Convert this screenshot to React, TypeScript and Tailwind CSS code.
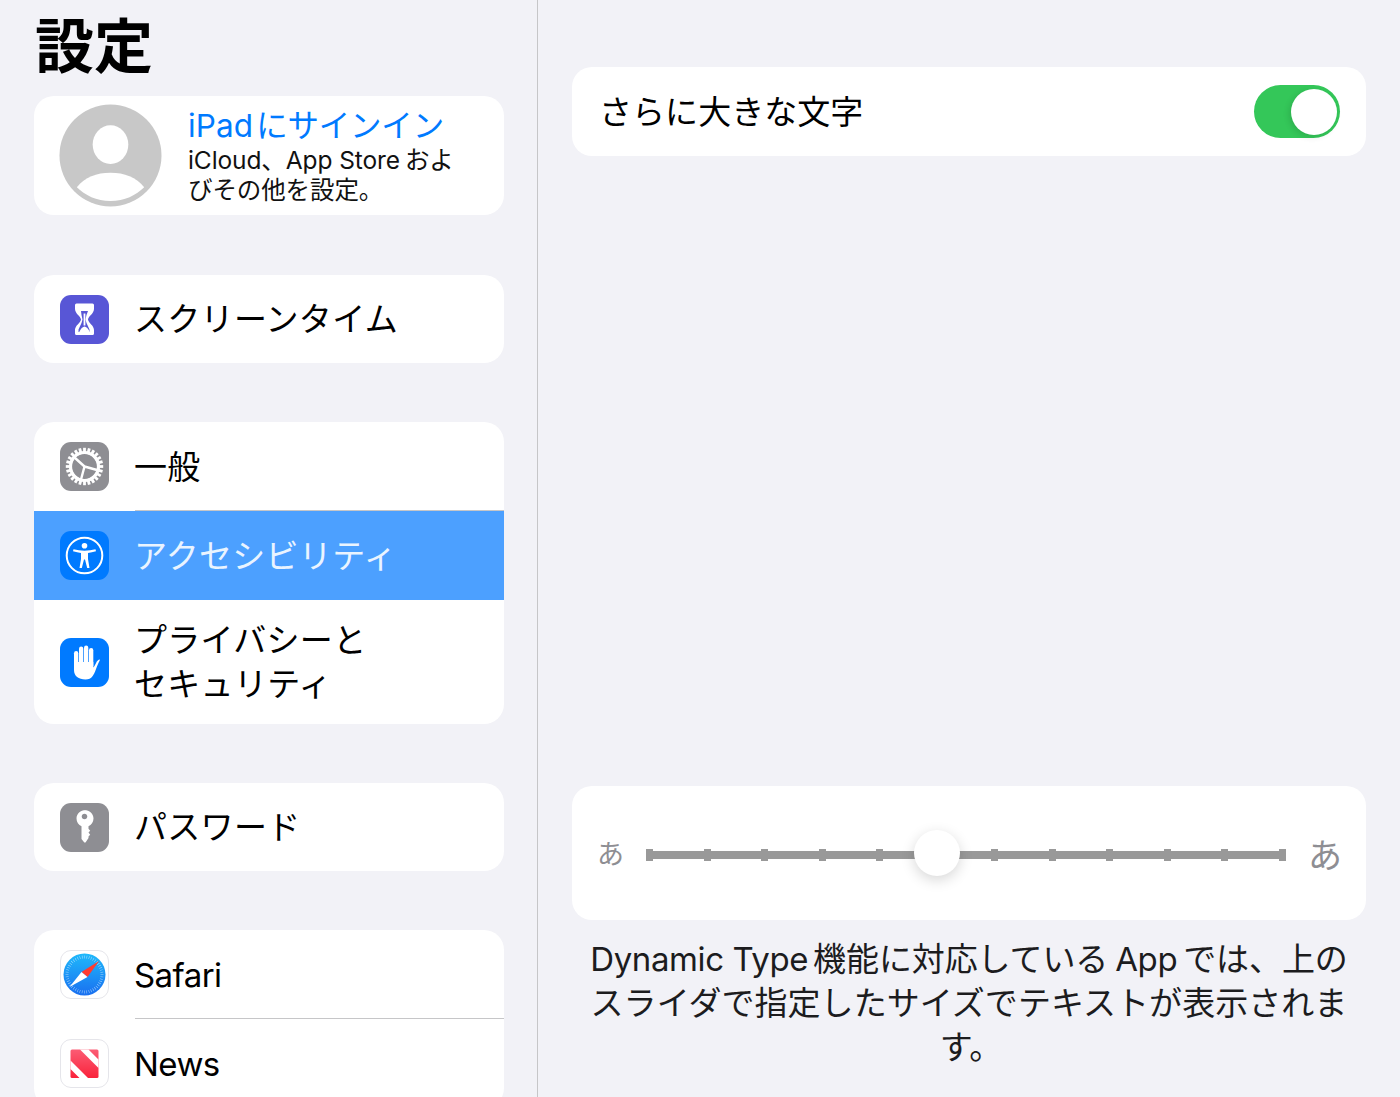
const FONT = "font-['Inter','Noto_Sans_CJK_JP',sans-serif]";

function Tile({ className, children }: { className: string; children: React.ReactNode }) {
  return (
    <div className={"w-[49px] h-[49px] rounded-[11px] flex items-center justify-center shrink-0 overflow-hidden " + className}>
      {children}
    </div>
  );
}

function Row({ icon, label, className = "", h = "h-[89px]", sep = false, latin = false }: { icon: React.ReactNode; label: React.ReactNode; className?: string; h?: string; sep?: boolean; latin?: boolean }) {
  return (
    <div className={"flex items-center pl-[26px] relative " + h + " " + className}>
      {icon}
      <div className={"ml-[25px] text-[33px] leading-[44px] " + (latin ? "tracking-[-0.55px]" : "tracking-[0.3px]")}>{label}</div>
      {sep && <div className="absolute left-[101px] right-0 bottom-0 h-px bg-[#c6c6c8]" />}
    </div>
  );
}

const HOUR = (
  <svg width="49" height="49" viewBox="0 0 49 49">
    <path d="M16.500 8.500h16a1.500 1.500 0 0 1 1.500 1.500v4c0 4.500-5.500 7-6 10.500 .5 3.500 6 6 6 10.500v3.500a1.500 1.500 0 0 1-1.500 1.500h-16a1.500 1.500 0 0 1-1.500-1.500V35c0-4.500 5.500-7 6-10.500-.5-3.500-6-6-6-10.500v-4a1.500 1.500 0 0 1 1.500-1.500z" fill="#fff" />
    <path d="M21 16h7l-1.500 4-1 4.500 1 3.500 3 6.500v2.500h-11V34.500l3-6.500 1-3.500-1-4.500z" fill="#5856d6" />
    <path d="M23.600 18.500h1.800v12h-1.800z" fill="#fff" />
    <path d="M19 37.500c1.500-4 4-6 5.500-6s4 2 5.500 6z" fill="#fff" />
  </svg>
);

function Gear() {
  const teeth = Array.from({ length: 24 }, (_, i) => i * 15);
  return (
    <svg width="49" height="49" viewBox="0 0 49 49">
      {teeth.map((a) => (
        <rect key={a} x="23.100" y="5.800" width="2.800" height="6" fill="#fff" transform={`rotate(${a} 24.500 24.500)`} />
      ))}
      <circle cx="24.500" cy="24.500" r="14" fill="none" stroke="#fff" strokeWidth="3.200" />
      <path d="M24.500 24.500L14.500 15.500M24.500 24.500L37 28M24.500 24.500L21 37.500" stroke="#fff" strokeWidth="2.400" fill="none" />
    </svg>
  );
}

const ACCESS = (
  <svg width="49" height="49" viewBox="0 0 49 49">
    <circle cx="24.500" cy="24.500" r="17.800" fill="none" stroke="#fff" strokeWidth="2" />
    <circle cx="24.500" cy="14.800" r="2.800" fill="#fff" />
    <path d="M13.500 18.300c3.500 .9 7.300 1.400 11 1.400s7.500-.5 11-1.400l.5 1.900c-2.800 .9-5.500 1.500-8 1.700v6.200l1.500 9h-2.300l-2.200-8.700h-1l-2.200 8.700H19.500l1.500-9v-6.200c-2.500-.2-5.200-.8-8-1.700z" fill="#fff" />
  </svg>
);

const HAND = (
  <svg width="49" height="49" viewBox="0 0 49 49">
    <rect x="14" y="13" width="4.300" height="16" rx="2.150" fill="#fff" />
    <rect x="19" y="8.500" width="4.300" height="20" rx="2.150" fill="#fff" />
    <rect x="24" y="7.500" width="4.300" height="20" rx="2.150" fill="#fff" />
    <rect x="29" y="10" width="4.300" height="20" rx="2.150" fill="#fff" />
    <path d="M14 24h19.300v5.500c1.300-1.200 2-3.200 2.900-4.700 .8-1.500 1.800-2.900 3-3.200 .6-.1 .8.3.5.9-1.400 2.400-2.500 5.300-3.500 8-1.500 4-2.300 5.900-3.700 7.800-1.600 2.100-3.800 3.200-7 3.200-7 0-11.500-3.500-11.500-9.500z" fill="#fff" />
  </svg>
);

const KEY = (
  <svg width="49" height="49" viewBox="0 0 49 49">
    <path fillRule="evenodd" d="M24.500 7c5 0 9 3.800 9 8.600 0 3.500-2.200 6.400-5 7.700v2.400l1.700 2-1.700 1.800 1.700 2.200-1.700 1.800v1.500l-3 4.500h-1.200l-2.800-3.500V23.300c-3-1.300-5-4.200-5-7.700 0-4.800 4-8.600 9-8.600zm0 3.800c-1.600 0-2.800 1.200-2.800 2.700s1.200 2.700 2.800 2.700 2.800-1.200 2.800-2.700-1.200-2.700-2.800-2.700z" fill="#fff" />
  </svg>
);

function Compass() {
  const ticks = Array.from({ length: 48 }, (_, i) => i * 7.5);
  return (
    <svg width="47" height="47" viewBox="1 1 47 47">
      <defs>
        <linearGradient id="saf" x1="0" y1="0" x2="0" y2="1">
          <stop offset="0" stopColor="#1fb9fb" />
          <stop offset="1" stopColor="#1a6ff0" />
        </linearGradient>
      </defs>
      <circle cx="24.500" cy="24.500" r="21" fill="url(#saf)" />
      {ticks.map((a) => (
        <rect key={a} x="24.300" y="5.500" width=".5" height="3" fill="#d5ecff" opacity=".8" transform={`rotate(${a} 24.500 24.500)`} />
      ))}
      <path d="M39 11 L27.500 27 L21.500 22 Z" fill="#ff3b30" />
      <path d="M9.500 37 L21.500 22 L27.500 27 Z" fill="#fff" />
    </svg>
  );
}

const NEWS = (
  <svg width="47" height="47" viewBox="1 1 47 47">
    <defs>
      <linearGradient id="nw" x1="0" y1="0" x2="0" y2="1">
        <stop offset="0" stopColor="#fb5c74" />
        <stop offset="1" stopColor="#fa233b" />
      </linearGradient>
    </defs>
    <rect x="10.500" y="10.500" width="28" height="28.500" rx="1.500" fill="url(#nw)" />
    <path d="M20 10.500h8.500L38.500 20.500v8.500zM10.500 21.500l17.500 17.500H19.500L10.500 30z" fill="#fff" />
  </svg>
);

export default function App() {
  const ticks = Array.from({ length: 12 }, (_, i) => i);
  return (
    <div className={"w-[1400px] h-[1097px] overflow-hidden flex bg-[#f2f2f7] text-black " + FONT}>
      <div className="w-[538px] shrink-0 border-r border-[#c6c6c8] pl-[34px] pr-[33.500px]">
        <h1 className="text-[59px] leading-[64px] font-bold mt-[15px] pl-[1px] h-[81px]">設定</h1>

        <div className="bg-white rounded-[20px] h-[119px] flex items-center pl-[25px] overflow-hidden">
          <svg width="103" height="103" viewBox="0 0 104 104" className="shrink-0">
            <circle cx="52" cy="52" r="51.500" fill="#c8c8c8" />
            <ellipse cx="52" cy="41" rx="18" ry="19.500" fill="#fff" />
            <path d="M18 84c8-10 20-14.500 34-14.500S78 74 86 84c-8 8-20 14-34 14S26 92 18 84z" fill="#fff" />
          </svg>
          <div className="ml-[26px]">
            <div className="flex text-[31.500px] leading-[38px] text-[#007aff] tracking-[-0.2px]"><span className="tracking-[0.1px]">iPad</span><span className="ml-[3px]">にサインイン</span></div>
            <div className="text-[24.500px] leading-[30px] tracking-[-0.1px] text-[#111]">
              <div className="flex"><span>iCloud、App Store</span><span className="ml-[5px]">およ</span></div>
              <div>びその他を設定。</div>
            </div>
          </div>
        </div>

        <div className="bg-white rounded-[20px] mt-[60px] overflow-hidden">
          <Row icon={<Tile className="bg-[#5856d6]">{HOUR}</Tile>} label="スクリーンタイム" h="h-[88px]" />
        </div>

        <div className="bg-white rounded-[20px] mt-[59px] overflow-hidden">
          <Row icon={<Tile className="bg-[#8e8e93]"><Gear /></Tile>} label="一般" sep />
          <Row className="bg-[#4ca0ff] text-[#eaf4ff]" icon={<Tile className="bg-[#007aff]">{ACCESS}</Tile>} label="アクセシビリティ" />
          <Row icon={<Tile className="bg-[#007aff]">{HAND}</Tile>} label={<>プライバシーと<br />セキュリティ</>} h="h-[124px]" />
        </div>

        <div className="bg-white rounded-[20px] mt-[59px] overflow-hidden">
          <Row icon={<Tile className="bg-[#8e8e93]">{KEY}</Tile>} label="パスワード" h="h-[88px]" />
        </div>

        <div className="bg-white rounded-[20px] mt-[59px] overflow-hidden">
          <Row latin icon={<Tile className="bg-white border border-[#e5e5ea]"><Compass /></Tile>} label="Safari" sep />
          <Row latin icon={<Tile className="bg-white border border-[#e5e5ea]">{NEWS}</Tile>} label="News" />
        </div>
      </div>

      <div className="flex-1 pl-[34px] pr-[34px] pt-[67px]">
        <div className="bg-white rounded-[20px] h-[89px] flex items-center justify-between pl-[27px] pr-[26px]">
          <div className="text-[33px] tracking-[0.05px] mt-[2px]">さらに大きな文字</div>
          <div className="w-[86px] h-[53px] rounded-full bg-[#34c759] flex items-center justify-end pr-[3px]">
            <div className="w-[46px] h-[46px] rounded-full bg-white shadow-[-2px_2px_6px_rgba(0,0,0,0.12)]" />
          </div>
        </div>

        <div className="bg-white rounded-[20px] h-[134px] mt-[630px] pt-[4px] flex items-center pl-[25px] pr-[26px]">
          <div className="text-[27px] text-[#8e8e93] w-[26px] shrink-0 text-center">あ</div>
          <div className="relative flex-1 ml-[23px] mr-[22px] h-[12px] flex items-center justify-between">
            <div className="absolute left-0 right-0 top-[2px] h-[8px] bg-[#999]" />
            {ticks.map((i) => (
              <div key={i} className="relative w-[7px] h-[12px] bg-[#999]" />
            ))}
            <div className="absolute left-[268px] top-[-19px] w-[46px] h-[46px] rounded-full bg-white shadow-[0_4px_14px_rgba(0,0,0,0.16)]" />
          </div>
          <div className="text-[34px] text-[#8e8e93] w-[32px] shrink-0 text-center">あ</div>
        </div>

        <div className="mt-[17px] text-[33px] leading-[44px] text-[#1c1c1e] flex flex-col items-center">
          <div className="flex tracking-[-0.1px]">
            <span className="tracking-[-0.4px]">Dynamic Type</span>
            <span className="ml-[5px]">機能に対応している</span>
            <span className="ml-[7px] tracking-[-0.4px]">App</span>
            <span className="ml-[6px]">では、上の</span>
          </div>
          <div className="tracking-[0.05px]">スライダで指定したサイズでテキストが表示されま</div>
          <div className="pl-[4px]">す。</div>
        </div>
      </div>
    </div>
  );
}
